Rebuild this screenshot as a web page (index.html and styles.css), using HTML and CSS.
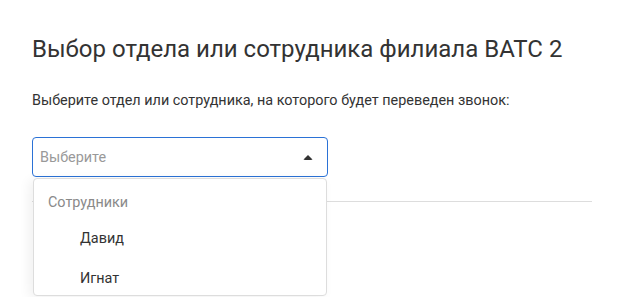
FILE: index.html
```html
<!DOCTYPE html>
<html lang="ru">
<head>
  <meta charset="UTF-8">
  <title>Выбор отдела</title>
  <link rel="stylesheet" href="styles.css">
</head>
<body>
  <div class="page">
    <h2>Выбор отдела или сотрудника филиала ВАТС 2</h2>
    <p class="hint">Выберите отдел или сотрудника, на которого будет переведен звонок:</p>

    <div class="select-wrap">
      <div class="select">
        <span class="placeholder">Выберите</span>
        <span class="arrow"></span>
      </div>
      <div class="menu">
        <div class="group">Сотрудники</div>
        <div class="option">Давид</div>
        <div class="option">Игнат</div>
      </div>
    </div>

    <div class="divider"></div>
  </div>
</body>
</html>
```

FILE: styles.css
```css
html,
body {
  height: 100%;
}

body {
  margin: 0;
  padding: 0;
  font-family: Roboto, 'Liberation Sans', sans-serif;
  background: #fff;
  color: #333;
  overflow: hidden;
}

.page {
  padding: 34px 32px 0;
  width: 624px;
  min-height: 100%;
  box-sizing: border-box;
}

h2 {
  margin: 0;
  font-size: 24px;
  font-weight: 400;
  line-height: 30px;
  color: #333;
}

.hint {
  margin: 28px 0 0;
  font-size: 14.4px;
  line-height: 18px;
  color: #333;
}

.select-wrap {
  position: relative;
  margin-top: 27px;
  width: 296px;
}

.select {
  height: 40px;
  box-sizing: border-box;
  border: 1px solid #2b72d6;
  border-radius: 4px;
  display: flex;
  align-items: center;
  justify-content: space-between;
  padding: 0 14px 0 7px;
}

.placeholder {
  font-size: 14.4px;
  color: #999;
}

.arrow {
  width: 0;
  height: 0;
  border-left: 5px solid transparent;
  border-right: 5px solid transparent;
  border-bottom: 5px solid #333;
  border-radius: 2px;
}

.menu {
  position: absolute;
  top: 41px;
  left: 1px;
  right: 1px;
  max-height: 118px;
  box-sizing: border-box;
  overflow: hidden;
  background: #fff;
  border: 1px solid #ddd;
  border-radius: 4px;
  box-shadow: -4px 2px 12px rgba(0, 0, 0, 0.06);
  padding: 9px 0 0;
  z-index: 2;
}

.group {
  padding: 3px 14px;
  height: 24px;
  line-height: 24px;
  font-size: 14.4px;
  color: #8a8a8a;
  margin-bottom: 1px;
}

.option {
  padding: 0 46px;
  height: 40px;
  line-height: 40px;
  font-size: 14.4px;
  color: #333;
}

.divider {
  margin-top: 24px;
  height: 1px;
  background: #ddd;
}
```
